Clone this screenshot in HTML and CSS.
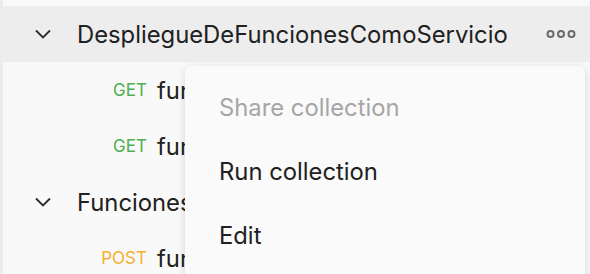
FILE: index.html
```html
<!DOCTYPE html>
<html lang="en">

<head>
    <meta charset="UTF-8">
    <title>Collections</title>
    <link rel="stylesheet" href="styles.css">
</head>

<body>
    <div class="sidebar">
        <div class="row folder active">
            <svg class="chevron" width="16" height="10" viewBox="0 0 16 10"><path d="M1 1.5 L8 8.5 L15 1.5" fill="none" stroke="#2b2b2b" stroke-width="1.8"/></svg>
            <span class="name">DespliegueDeFuncionesComoServicio</span>
            <svg class="more" width="30" height="10" viewBox="0 0 30 10"><circle cx="4.5" cy="5" r="3" fill="none" stroke="#6b6b6b" stroke-width="2"/><circle cx="15" cy="5" r="3" fill="none" stroke="#6b6b6b" stroke-width="2"/><circle cx="25.5" cy="5" r="3" fill="none" stroke="#6b6b6b" stroke-width="2"/></svg>
        </div>
        <div class="row request">
            <span class="method get">GET</span>
            <span class="name">funcion1</span>
        </div>
        <div class="row request">
            <span class="method get">GET</span>
            <span class="name">funcion2</span>
        </div>
        <div class="row folder">
            <svg class="chevron" width="16" height="10" viewBox="0 0 16 10"><path d="M1 1.5 L8 8.5 L15 1.5" fill="none" stroke="#2b2b2b" stroke-width="1.8"/></svg>
            <span class="name">FuncionesServidor</span>
        </div>
        <div class="row request">
            <span class="method post">POST</span>
            <span class="name">funcion3</span>
        </div>

        <div class="menu">
            <div class="item disabled">Share collection</div>
            <div class="item">Run collection</div>
            <div class="item">Edit</div>
        </div>
    </div>
</body>

</html>
```

FILE: styles.css
```css
* {
    box-sizing: border-box;
}

body {
    margin: 0;
    background-color: #f9f9f9;
    font-family: Inter, "Noto Sans", sans-serif;
    color: #212121;
    overflow: hidden;
}

.sidebar {
    position: relative;
    height: 274px;
    overflow: hidden;
    padding-top: 6px;
    border-left: 3px solid #ececec;
}

.row {
    display: flex;
    align-items: center;
    height: 56px;
    white-space: nowrap;
}

.row.active {
    background-color: #ededed;
}

.folder .chevron {
    margin-left: 32px;
    margin-right: 26px;
}

.folder .name {
    font-size: 23.8px;
    flex: 1;
}

.more {
    margin-right: 14px;
}

.request .method {
    width: 144px;
    text-align: right;
    font-size: 17px;
}

.request .name {
    margin-left: 10px;
    font-size: 23.8px;
}

.get {
    color: #4caf50;
}

.post {
    color: #f5b031;
}

/* context menu floats over the tree */
.menu {
    position: absolute;
    left: 182px;
    top: 66px;
    width: 400px;
    height: 240px;
    background-color: #fafafa;
    border-radius: 7px;
    box-shadow: 0 2px 10px rgba(0, 0, 0, 0.14);
    padding-top: 10px;
}

.menu .item {
    height: 64px;
    line-height: 64px;
    padding-left: 34px;
    font-size: 23.8px;
    color: #212121;
}

.menu .item.disabled {
    color: #a6a6a6;
}
```
